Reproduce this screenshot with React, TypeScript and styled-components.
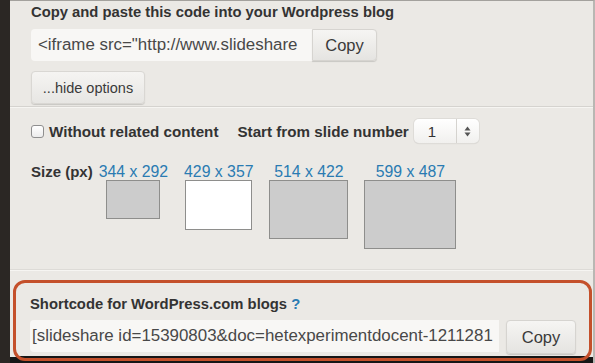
import styled, { createGlobalStyle } from 'styled-components';

const GlobalStyle = createGlobalStyle`
  html, body {
    margin: 0;
    padding: 0;
    background: #151515;
  }
  body {
    font-family: "Liberation Sans", Arial, Helvetica, sans-serif;
  }
`;

const sizes = [
  { label: '344 x 292', w: 54, h: 39, selected: false },
  { label: '429 x 357', w: 67, h: 50, selected: true },
  { label: '514 x 422', w: 79, h: 59, selected: false },
  { label: '599 x 487', w: 92, h: 69, selected: false },
];

function App() {
  return (
    <Page>
      <GlobalStyle />
      <LeftStrip />
      <Panel>
        <Section>
          <Heading>Copy and paste this code into your Wordpress blog</Heading>
          <CodeRow>
            <CodeField width={281} indent={7}>&lt;iframe src="http://www.slideshare</CodeField>
            <CopyButton joined>Copy</CopyButton>
          </CodeRow>
          <OptionButton>...hide options</OptionButton>
        </Section>
        <Divider />
        <Options>
          <OptionRow>
            <CheckLabel>
              <CheckBox />
              Without related content
            </CheckLabel>
            <CheckLabel>Start from slide number</CheckLabel>
            <Stepper>
              <StepperValue>1</StepperValue>
              <StepperArrows>
                <svg width="7" height="11" viewBox="0 0 7 11">
                  <path d="M3.5 0.5 L6.5 4.5 L0.5 4.5 Z" fill="#555" />
                  <path d="M3.5 10.5 L6.5 6.5 L0.5 6.5 Z" fill="#555" />
                </svg>
              </StepperArrows>
            </Stepper>
          </OptionRow>
          <SizeRow>
            <SizeTitle>Size (px)</SizeTitle>
            <SizeList>
              {sizes.map((s) => (
                <SizeItem key={s.label}>
                  <SizeLink>{s.label}</SizeLink>
                  <SizePreview selected={s.selected} style={{ width: s.w, height: s.h }} />
                </SizeItem>
              ))}
            </SizeList>
          </SizeRow>
        </Options>
        <Spacer />
        <Divider light />
        <Highlight>
          <Heading>
            Shortcode for WordPress.com blogs <Help>?</Help>
          </Heading>
          <ShortcodeRow>
            <CodeField width={469} indent={2}>[slideshare id=15390803&amp;doc=hetexperimentdocent-1211281</CodeField>
            <CopyButton>Copy</CopyButton>
          </ShortcodeRow>
        </Highlight>
      </Panel>
    </Page>
  );
}

export default App;

const Page = styled.div`
  display: flex;
  width: 595px;
  height: 363px;
  overflow: hidden;
  background: #151515;
`;

const LeftStrip = styled.div`
  width: 10px;
  flex-shrink: 0;
  background: #2b2724;
`;

const Panel = styled.div`
  flex: 1;
  display: flex;
  flex-direction: column;
  box-sizing: border-box;
  border-top: 1px solid #a3a19d;
  border-right: 2px solid #b9b7b3;
  background: linear-gradient(to bottom, #ebe9e5 356px, #161616 356px);
`;

const Section = styled.div`
  display: flex;
  flex-direction: column;
  align-items: flex-start;
  padding: 2px 0 0 21px;
`;

const Heading = styled.div`
  font-size: 14.8px;
  font-weight: bold;
  line-height: 18px;
  color: #333;
  white-space: nowrap;
`;

const Help = styled.span`
  color: #2a7bb2;
`;

const CodeRow = styled.div`
  display: flex;
  margin-top: 8px;
  height: 32px;
`;

const CodeField = styled.div<{ width: number; indent: number }>`
  width: ${(p) => p.width}px;
  height: 32px;
  box-sizing: border-box;
  padding: 0 0 0 ${(p) => p.indent}px;
  display: flex;
  align-items: center;
  overflow: hidden;
  white-space: nowrap;
  background: #f8f7f5;
  border-radius: 4px 0 0 4px;
  font-size: 16.9px;
  color: #484848;
`;

const CopyButton = styled.div<{ joined?: boolean }>`
  width: ${(p) => (p.joined ? 65 : 70)}px;
  height: ${(p) => (p.joined ? 32 : 34)}px;
  margin-left: ${(p) => (p.joined ? 0 : 7)}px;
  flex-shrink: 0;
  box-sizing: border-box;
  display: flex;
  align-items: center;
  justify-content: center;
  font-size: 16.5px;
  color: #3a3a3a;
  background: linear-gradient(to bottom, #f6f5f3, #e5e4e1);
  border: 1px solid #d6d4d0;
  border-radius: ${(p) => (p.joined ? '0 4px 4px 0' : '4px')};
  box-shadow: 0 1px 1px rgba(0, 0, 0, 0.15);
`;

const OptionButton = styled.div`
  margin-top: 10px;
  width: 114px;
  height: 33px;
  box-sizing: border-box;
  display: flex;
  align-items: center;
  justify-content: center;
  font-size: 14.5px;
  color: #3a3a3a;
  background: linear-gradient(to bottom, #f5f4f2, #e7e6e3);
  border: 1px solid #d9d7d3;
  border-radius: 4px;
  box-shadow: 0 1px 1px rgba(0, 0, 0, 0.15);
`;

const Divider = styled.div<{ light?: boolean }>`
  height: 1px;
  margin-top: ${(p) => (p.light ? 0 : 2)}px;
  background: ${(p) => (p.light ? '#dddbd7' : '#d5d3cf')};
  border-bottom: 1px solid #f6f5f2;
`;

const Options = styled.div`
  display: flex;
  flex-direction: column;
  padding: 11px 0 0 21px;
`;

const OptionRow = styled.div`
  display: flex;
  align-items: center;
  height: 24px;
`;

const CheckLabel = styled.label`
  display: flex;
  align-items: center;
  font-size: 15.2px;
  font-weight: bold;
  color: #333;
  white-space: nowrap;
  margin-right: 19px;
  &:nth-child(2) {
    margin-right: 5px;
  }
`;

const CheckBox = styled.span`
  width: 13px;
  height: 13px;
  box-sizing: border-box;
  margin-right: 5px;
  border: 1px solid #8f8f8f;
  border-radius: 3px;
  background: linear-gradient(to bottom, #ffffff, #ececec);
`;

const Stepper = styled.div`
  display: flex;
  width: 65px;
  height: 24px;
  box-sizing: border-box;
  border-radius: 5px;
  background: linear-gradient(to bottom, #ffffff, #f1f0ee);
  box-shadow: 0 0 0 1px #dedcd8, 0 1px 1px rgba(0, 0, 0, 0.12);
`;

const StepperValue = styled.div`
  flex: 1;
  display: flex;
  align-items: center;
  padding-left: 14px;
  font-size: 15px;
  color: #333;
  border-right: 1px solid #d5d3cf;
`;

const StepperArrows = styled.div`
  width: 22px;
  display: flex;
  align-items: center;
  justify-content: center;
`;

const SizeRow = styled.div`
  display: flex;
  align-items: flex-start;
  margin-top: 20px;
`;

const SizeTitle = styled.div`
  font-size: 15px;
  font-weight: bold;
  color: #333;
  line-height: 17px;
  margin-right: 6px;
`;

const SizeList = styled.div`
  display: flex;
  gap: 16px;
  align-items: flex-start;
`;

const SizeItem = styled.div`
  display: flex;
  flex-direction: column;
  align-items: center;
`;

const SizeLink = styled.div`
  font-size: 15.8px;
  line-height: 17px;
  color: #2a7bb2;
  white-space: nowrap;
`;

const SizePreview = styled.div<{ selected?: boolean }>`
  box-sizing: border-box;
  border: 1px solid #8e8e8c;
  background: ${(p) => (p.selected ? '#ffffff' : '#cccccc')};
`;

const Spacer = styled.div`
  flex: 1;
`;

const Highlight = styled.div`
  margin: 9px 1px 2px 3px;
  height: 81px;
  box-sizing: border-box;
  border: 3px solid #c4502b;
  border-radius: 12px;
  padding: 12px 0 0 14px;
  background: linear-gradient(to bottom, #ebe9e5 73px, #161616 73px);
`;

const ShortcodeRow = styled.div`
  display: flex;
  align-items: flex-start;
  margin-top: 7px;
`;
